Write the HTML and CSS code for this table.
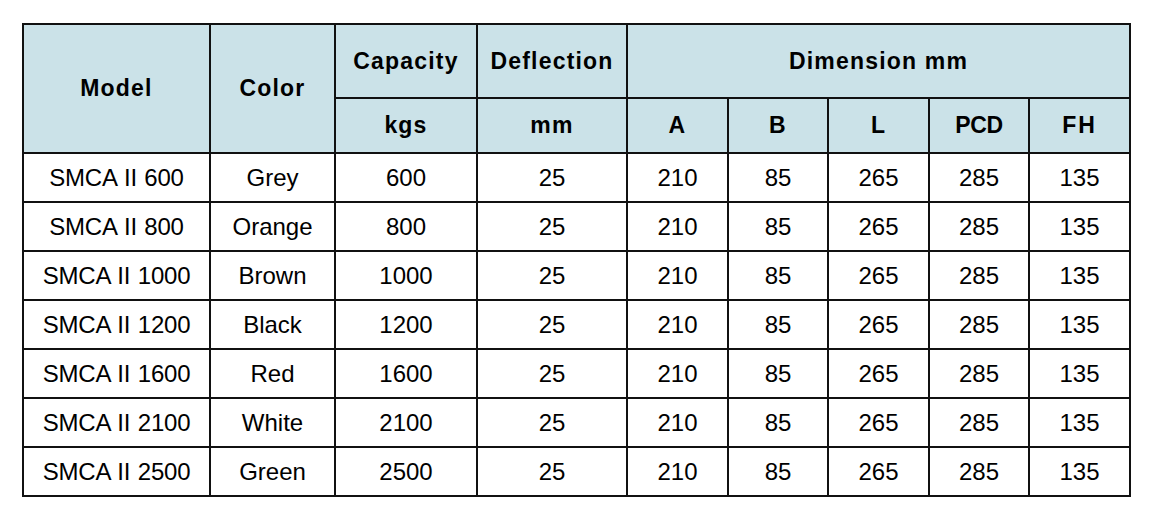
FILE: index.html
```html
<!DOCTYPE html>
<html>
<head>
<meta charset="utf-8">
<link rel="stylesheet" href="styles.css">
</head>
<body>
<table class="spec">
  <colgroup>
    <col class="c-model"><col class="c-color"><col class="c-cap"><col class="c-def">
    <col class="c-dim"><col class="c-dim2"><col class="c-dim"><col class="c-dim2"><col class="c-dim">
  </colgroup>
  <thead>
    <tr class="h1">
      <th rowspan="2">Model</th>
      <th rowspan="2">Color</th>
      <th>Capacity</th>
      <th>Deflection</th>
      <th colspan="5">Dimension mm</th>
    </tr>
    <tr class="h2">
      <th>kgs</th>
      <th>mm</th>
      <th>A</th>
      <th>B</th>
      <th>L</th>
      <th class="tight">PCD</th>
      <th class="wide">FH</th>
    </tr>
  </thead>
  <tbody>
    <tr><td class="model">SMCA II 600</td><td>Grey</td><td>600</td><td>25</td><td>210</td><td>85</td><td>265</td><td>285</td><td>135</td></tr>
    <tr><td class="model">SMCA II 800</td><td>Orange</td><td>800</td><td>25</td><td>210</td><td>85</td><td>265</td><td>285</td><td>135</td></tr>
    <tr><td class="model">SMCA II 1000</td><td>Brown</td><td>1000</td><td>25</td><td>210</td><td>85</td><td>265</td><td>285</td><td>135</td></tr>
    <tr><td class="model">SMCA II 1200</td><td>Black</td><td>1200</td><td>25</td><td>210</td><td>85</td><td>265</td><td>285</td><td>135</td></tr>
    <tr><td class="model">SMCA II 1600</td><td>Red</td><td>1600</td><td>25</td><td>210</td><td>85</td><td>265</td><td>285</td><td>135</td></tr>
    <tr><td class="model">SMCA II 2100</td><td>White</td><td>2100</td><td>25</td><td>210</td><td>85</td><td>265</td><td>285</td><td>135</td></tr>
    <tr><td class="model">SMCA II 2500</td><td>Green</td><td>2500</td><td>25</td><td>210</td><td>85</td><td>265</td><td>285</td><td>135</td></tr>
  </tbody>
</table>
</body>
</html>
```
FILE: styles.css
```css
html, body {
  margin: 0;
  padding: 0;
  background: #ffffff;
}
body {
  padding: 23px 0 0 22px;
  font-family: "Liberation Sans", Arial, sans-serif;
  color: #000;
}
.spec {
  border-collapse: collapse;
  table-layout: fixed;
  width: 1109px;
}
.c-model { width: 187px; }
.c-color { width: 125px; }
.c-cap { width: 142px; }
.c-def { width: 150px; }
.c-dim { width: 101px; }
.c-dim2 { width: 100px; }
.spec th, .spec td {
  border: 2px solid #111;
  padding: 0;
  text-align: center;
  vertical-align: middle;
  overflow: hidden;
  white-space: nowrap;
}
.spec th {
  background: #cbe2e8;
  font-weight: bold;
  font-size: 23px;
  letter-spacing: 1.2px;
}
.spec th.tight { letter-spacing: -0.3px; }
.spec th.wide { letter-spacing: 2px; }
.h1 { height: 74px; }
.h2 { height: 55px; }
.spec td {
  font-size: 24px;
  height: 47px;
}
.spec td.model { letter-spacing: -0.2px; word-spacing: 1px; }
```
